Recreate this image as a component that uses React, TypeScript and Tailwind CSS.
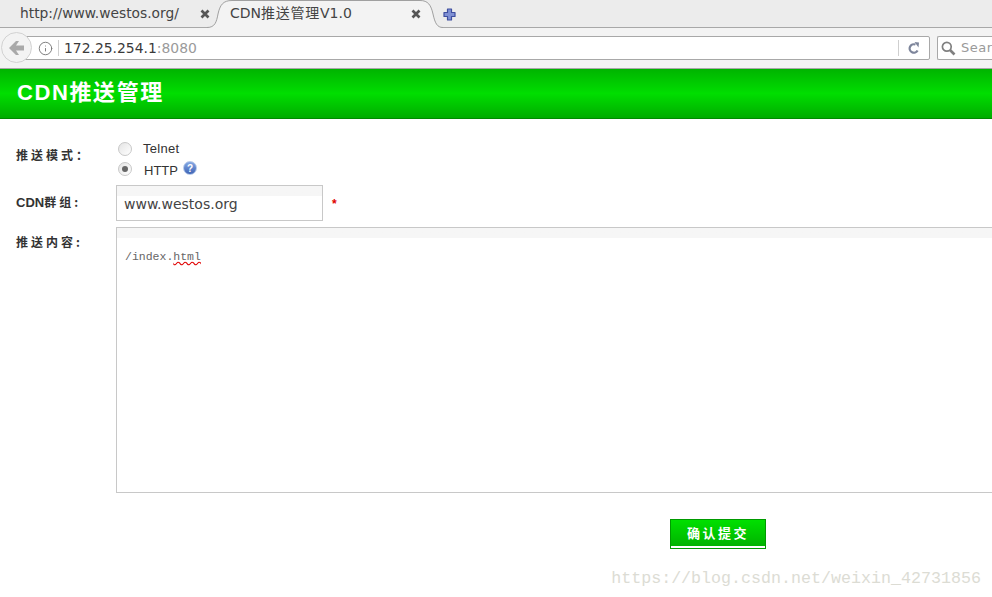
import { Info } from 'lucide-react';

const cjk = '"Noto Sans CJK SC", serif';

function CloseIcon() {
  return (
    <svg width="10" height="10" viewBox="0 0 10 10" className="relative shrink-0">
      <path d="M1.5 1.5 L8.5 8.5 M8.5 1.5 L1.5 8.5" stroke="#555" strokeWidth="2.7" />
    </svg>
  );
}

function ActiveTabShape() {
  return (
    <svg width="245" height="29" viewBox="0 0 245 29" className="absolute -left-[16px] top-0">
      <path d="M4 29 L4 27.5 C12 27.5 13.5 22 15 14 C17 5 20 .5 29 .5 L217 .5 C225 .5 228 5 230 14 C232 23 234 27.5 240 27.5 L240 29 Z" fill="#f3f3f3" />
      <path d="M4 27.5 C12 27.5 13.5 22 15 14 C17 5 20 .5 29 .5 L217 .5 C225 .5 228 5 230 14 C232 23 234 27.5 240 27.5" fill="none" stroke="#a0a0a0" />
    </svg>
  );
}

function BrowserChrome() {
  return (
    <div className="font-['DejaVu_Sans','Noto_Sans_CJK_SC',sans-serif] text-[#3a3a3a]">
      <div className="h-[28px] bg-[#ececec] border-b border-[#a8a8a8] flex items-start">
        <div className="w-[219px] h-[27px] pl-[20px] pr-[9px] flex items-center justify-between text-[13.8px] text-[#444]">
          <span>http://www.westos.org/</span>
          <CloseIcon />
        </div>
        <div className="relative w-[214px] h-[27px] pl-[11px] pr-[12px] flex items-center justify-between text-[14px] text-[#444]">
          <ActiveTabShape />
          <span className="relative">CDN<span className="tracking-[0.75px]">推送管理</span>V1.0</span>
          <CloseIcon />
        </div>
        <div className="relative h-[27px] ml-[10px] pt-[1px] flex items-center">
          <svg width="13" height="13" viewBox="0 0 13 13">
            <path d="M4.5 1 H8.5 V4.5 H12 V8.5 H8.5 V12 H4.5 V8.5 H1 V4.5 H4.5 Z" fill="#7f90d4" stroke="#3f4f9f" strokeWidth="1.2" strokeLinejoin="round" />
          </svg>
        </div>
      </div>
      <div className="h-[41px] bg-[#f3f3f3] border-b border-[#a8a8a8] flex items-center relative">
        <div className="absolute left-px top-[4px] w-[31px] h-[31px] rounded-full border border-[#d2d2d2] bg-[#f3f3f3] flex items-center justify-center">
          <svg width="15" height="14" viewBox="0 0 15 14">
            <path d="M0 7 L7 0 L10 0 L7 4.5 L15 4.5 L15 9.5 L7 9.5 L10 14 L7 14 Z" fill="#a9a9a9" />
          </svg>
        </div>
        <div className="ml-[20px] w-[910px] h-[24px] bg-white border border-[#a8a8a8] rounded-r-[2px] flex items-center">
          <Info size={15} strokeWidth={1.5} className="ml-[17px] text-[#777]" />
          <div className="w-px h-[16px] bg-[#cfcfcf] ml-[5px]" />
          <span className="ml-[5px] text-[13.9px]">172.25.254.1<span className="text-[#9a9a9a]">:8080</span></span>
          <div className="ml-auto w-px h-[16px] bg-[#cfcfcf]" />
          <svg width="12" height="12" viewBox="0 0 12 12" className="mx-[9px]">
            <path d="M9.6 8.4 A4.2 4.2 0 1 1 7.5 2.6" fill="none" stroke="#7d859b" strokeWidth="2.2" />
            <path d="M6.5 0 L11 0.5 L10.5 5.5 Z" fill="#7d859b" />
          </svg>
        </div>
        <div className="ml-[7px] flex-1 h-[24px] bg-white border border-r-0 border-[#a8a8a8] rounded-l-[2px] flex items-center overflow-hidden">
          <svg width="15" height="15" viewBox="0 0 15 15" className="ml-[3px] shrink-0">
            <circle cx="5.8" cy="5.8" r="4.4" fill="none" stroke="#808080" strokeWidth="1.7" />
            <path d="M9 9 L13.5 13.5" stroke="#808080" strokeWidth="2.6" />
          </svg>
          <span className="ml-[5px] text-[13px] text-[#9a9a9a] tracking-[0.5px]">Search</span>
        </div>
      </div>
    </div>
  );
}

function Label({ text, latin }: { text: string; latin?: string }) {
  return (
    <span className="text-[12px] font-bold text-[#333] tracking-[3px]" style={{ fontFamily: cjk }}>
      {latin && <span className="font-['Liberation_Sans',sans-serif] text-[13px] tracking-normal">{latin}</span>}
      {text}
    </span>
  );
}

export default function App() {
  return (
    <div className="relative h-[597px] w-[992px] overflow-hidden bg-white font-['Liberation_Sans',sans-serif]">
      <BrowserChrome />
      <header className="h-[50px] bg-gradient-to-b from-[#00b400] via-[#00de00] to-[#00ac00] border-b border-[#008a00] pl-[17px] pb-[2px] flex items-center">
        <h1 className="text-[22px] font-bold text-white tracking-[1.6px]" style={{ fontFamily: `"Liberation Sans", ${cjk}` }}>CDN推送管理</h1>
      </header>

      <form className="pt-[20px]">
        <div className="flex h-[42px]">
          <div className="w-[118px] pl-[16px] pt-[4px]"><Label text="推送模式：" /></div>
          <div className="text-[13px] text-[#333]">
            <div className="flex items-center h-[20px]">
              <span className="w-[14px] h-[14px] rounded-full border border-[#c8c8c8] bg-gradient-to-br from-[#e4e4e4] to-white" />
              <span className="ml-[11px] tracking-[0.3px]">Telnet</span>
            </div>
            <div className="flex items-center h-[20px]">
              <span className="w-[14px] h-[14px] rounded-full border border-[#c8c8c8] bg-gradient-to-br from-[#e4e4e4] to-white flex items-center justify-center">
                <span className="w-[6px] h-[6px] rounded-full bg-[#666]" />
              </span>
              <span className="ml-[12px] mt-[3px]">HTTP</span>
              <span className="ml-[5px] -mt-[2px] w-[14px] h-[14px] rounded-full bg-gradient-to-b from-[#86a8e4] to-[#3f64b5] border border-[#b4c8ea] text-white text-[10px] font-bold flex items-center justify-center">?</span>
            </div>
          </div>
        </div>

        <div className="flex mt-[4px] h-[36px]">
          <div className="w-[116px] pl-[16px] pt-[5px]"><Label latin="CDN" text="群组:" /></div>
          <div className="w-[207px] h-[36px] border border-[#c8c8c8] bg-gradient-to-b from-[#f6f6f6] from-[10px] to-white to-[10px] px-[7px] flex items-end pb-[5px] text-[14px] text-[#444] font-['DejaVu_Sans',sans-serif]">www.westos.org</div>
          <span className="ml-[9px] mt-[10px] text-[12px] font-bold text-[#e00000]">*</span>
        </div>

        <div className="flex mt-[6px]">
          <div className="w-[116px] pl-[16px] pt-[3px]"><Label text="推送内容:" /></div>
          <div className="flex-1 h-[266px] border border-r-0 border-[#c8c8c8] bg-gradient-to-b from-[#f6f6f6] from-[10px] to-white to-[10px] pl-[8px] pt-[20px] text-[11.5px] text-[#666] font-['Liberation_Mono',monospace]">
            /index.<span className="underline decoration-wavy decoration-[#e00000]">html</span>
          </div>
        </div>

        <div className="flex justify-center pl-[444px] mt-[26px]">
          <button type="button" className="w-[96px] h-[30px] border border-[#009a00] bg-gradient-to-b from-[#00e000] to-[#00b000] shadow-[inset_0_-2px_0_#ffffff] pb-[2px] text-[13px] font-bold text-white tracking-[2.5px]" style={{ fontFamily: cjk }}>确认提交</button>
        </div>
      </form>

      <div className="absolute right-[11px] top-[566px] font-['Liberation_Mono',serif] text-[16.67px] text-[#dcdcd4] pointer-events-none">https://blog.csdn.net/weixin_42731856</div>
    </div>
  );
}
